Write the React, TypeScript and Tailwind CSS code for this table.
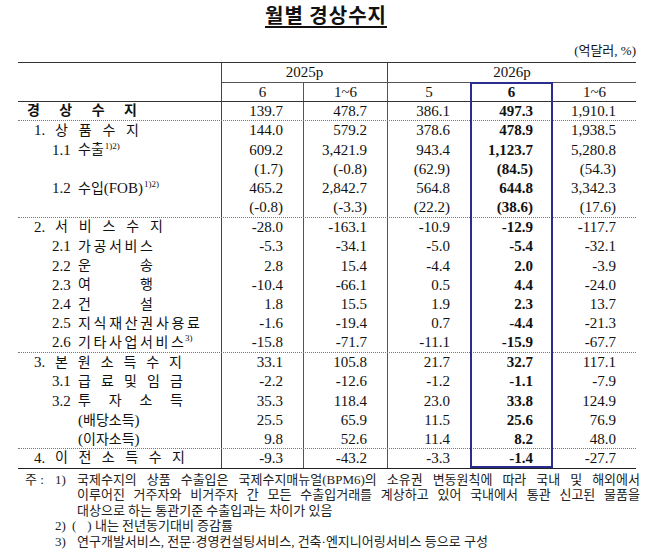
import React from "react";

const serif = "font-['Liberation_Serif','Noto_Sans_CJK_KR',serif]";

interface IRow {
  label: React.ReactNode;
  vals: string[];
  line?: "dotted" | "solid";
}

const Spread = ({ text, className }: { text: string; className: string }) => (
  <span className={`flex justify-between text-[14px] ${className}`}>
    {text.split("").map((c, i) => (
      <span key={i}>{c}</span>
    ))}
  </span>
);

const Sup = ({ children }: { children: React.ReactNode }) => (
  <sup className="ml-[1px] text-[9px]">{children}</sup>
);

// main section: "1." then spaced hangul
const Main = ({ no, text, w }: { no: string; text: string; w: string }) => (
  <span className="flex items-center pl-[16px]">
    <span className="w-[21px]">{no}</span>
    <Spread text={text} className={w} />
  </span>
);

// sub section: "2.1" then hangul
const Sub = ({ no, children }: { no: string; children: React.ReactNode }) => (
  <span className="flex items-center pl-[34px]">
    <span className="w-[26px]">{no}</span>
    {children}
  </span>
);

const rows: IRow[] = [
  {
    label: (
      <span className="pl-[9px]">
        <Spread text="경상수지" className="w-[110px] font-bold" />
      </span>
    ),
    vals: ["139.7", "478.7", "386.1", "497.3", "1,910.1"],
    line: "dotted",
  },
  { label: <Main no="1." text="상품수지" w="w-[84px]" />, vals: ["144.0", "579.2", "378.6", "478.9", "1,938.5"] },
  {
    label: (
      <Sub no="1.1">
        <span className="text-[14px]">수출</span>
        <Sup>1)2)</Sup>
      </Sub>
    ),
    vals: ["609.2", "3,421.9", "943.4", "1,123.7", "5,280.8"],
  },
  { label: null, vals: ["(1.7)", "(-0.8)", "(62.9)", "(84.5)", "(54.3)"] },
  {
    label: (
      <Sub no="1.2">
        <span className="text-[14px]">수입</span>
        <span>(FOB)</span>
        <Sup>1)2)</Sup>
      </Sub>
    ),
    vals: ["465.2", "2,842.7", "564.8", "644.8", "3,342.3"],
  },
  { label: null, vals: ["(-0.8)", "(-3.3)", "(22.2)", "(38.6)", "(17.6)"], line: "dotted" },
  { label: <Main no="2." text="서비스수지" w="w-[108px]" />, vals: ["-28.0", "-163.1", "-10.9", "-12.9", "-117.7"] },
  {
    label: (
      <Sub no="2.1">
        <Spread text="가공서비스" className="w-[75px]" />
      </Sub>
    ),
    vals: ["-5.3", "-34.1", "-5.0", "-5.4", "-32.1"],
  },
  {
    label: (
      <Sub no="2.2">
        <Spread text="운송" className="w-[75px]" />
      </Sub>
    ),
    vals: ["2.8", "15.4", "-4.4", "2.0", "-3.9"],
  },
  {
    label: (
      <Sub no="2.3">
        <Spread text="여행" className="w-[75px]" />
      </Sub>
    ),
    vals: ["-10.4", "-66.1", "0.5", "4.4", "-24.0"],
  },
  {
    label: (
      <Sub no="2.4">
        <Spread text="건설" className="w-[75px]" />
      </Sub>
    ),
    vals: ["1.8", "15.5", "1.9", "2.3", "13.7"],
  },
  {
    label: (
      <Sub no="2.5">
        <Spread text="지식재산권사용료" className="w-[122px]" />
      </Sub>
    ),
    vals: ["-1.6", "-19.4", "0.7", "-4.4", "-21.3"],
  },
  {
    label: (
      <Sub no="2.6">
        <Spread text="기타사업서비스" className="w-[106px]" />
        <Sup>3)</Sup>
      </Sub>
    ),
    vals: ["-15.8", "-71.7", "-11.1", "-15.9", "-67.7"],
    line: "dotted",
  },
  { label: <Main no="3." text="본원소득수지" w="w-[127px]" />, vals: ["33.1", "105.8", "21.7", "32.7", "117.1"] },
  {
    label: (
      <Sub no="3.1">
        <Spread text="급료및임금" className="w-[105px]" />
      </Sub>
    ),
    vals: ["-2.2", "-12.6", "-1.2", "-1.1", "-7.9"],
  },
  {
    label: (
      <Sub no="3.2">
        <Spread text="투자소득" className="w-[105px]" />
      </Sub>
    ),
    vals: ["35.3", "118.4", "23.0", "33.8", "124.9"],
  },
  {
    label: (
      <span className="pl-[60px]">
        (<span className="text-[14px]">배당소득</span>)
      </span>
    ),
    vals: ["25.5", "65.9", "11.5", "25.6", "76.9"],
  },
  {
    label: (
      <span className="pl-[60px]">
        (<span className="text-[14px]">이자소득</span>)
      </span>
    ),
    vals: ["9.8", "52.6", "11.4", "8.2", "48.0"],
    line: "dotted",
  },
  { label: <Main no="4." text="이전소득수지" w="w-[130px]" />, vals: ["-9.3", "-43.2", "-3.3", "-1.4", "-27.7"], line: "solid" },
];

const cols = [
  "w-[82px] border-r border-[#555]",
  "w-[84px] border-r border-[#555]",
  "w-[82px]",
  "w-[83px] font-bold",
  "w-[83px]",
];

const App = () => {
  return (
    <div className={`w-[658px] h-[559px] bg-white text-[#111] ${serif}`}>
      <div className="h-[40px] flex justify-center pt-[3px] pr-[6px]">
        <h1 className="font-['Noto_Sans_CJK_KR',sans-serif] text-[20px] font-bold leading-[24px] tracking-[1px] underline underline-offset-[3px] decoration-[1.5px]">
          월별 경상수지
        </h1>
      </div>
      <div className="h-[22px] pr-[22px] text-right text-[13px] leading-[22px]">(억달러, %)</div>

      <div className="relative ml-[18px] w-[618px] border-t border-[#333] text-[15px]">
        {/* header */}
        <div className="flex h-[39px] border-b border-[#333]">
          <div className="w-[204px] border-r border-[#444]" />
          <div className="flex w-[414px] flex-col">
            <div className="flex h-[20px] border-b border-[#555]">
              <div className="flex w-[166px] items-center justify-center border-r border-[#444] leading-none">2025p</div>
              <div className="flex w-[248px] items-center justify-center leading-none">2026p</div>
            </div>
            <div className="flex h-[18px]">
              {["6", "1~6", "5", "6", "1~6"].map((h, i) => (
                <div key={i} className={`flex items-center justify-center leading-none ${cols[i]}`}>
                  {h}
                </div>
              ))}
            </div>
          </div>
        </div>

        {/* body */}
        {rows.map((r, ri) => (
          <div
            key={ri}
            className={`flex h-[19.3px] ${
              r.line === "dotted"
                ? "border-b border-dotted border-[#777]"
                : r.line === "solid"
                ? "border-b border-[#222]"
                : ""
            }`}
          >
            <div className="flex w-[204px] items-center border-r border-[#444] leading-none">{r.label}</div>
            {r.vals.map((v, i) => (
              <div key={i} className={`flex items-center justify-end pr-5 leading-none ${cols[i]}`}>
                {v}
              </div>
            ))}
          </div>
        ))}

        <div className="absolute left-[452px] top-[19px] h-[386px] w-[83px] border-2 border-[#2b2d8e]" />
      </div>

      {/* notes */}
      <div className="mt-[3px] text-[13px] leading-[15.5px] text-[#222]">
        <div className="flex">
          <span className="ml-[25px] w-[30px]">주 :</span>
          <span className="w-[22px]">1)</span>
          <span className="w-[563px] text-justify [text-align-last:justify]">
            국제수지의 상품 수출입은 국제수지매뉴얼(BPM6)의 소유권 변동원칙에 따라 국내 및 해외에서
          </span>
        </div>
        <div className="ml-[77px] w-[563px] text-justify [text-align-last:justify]">
          이루어진 거주자와 비거주자 간 모든 수출입거래를 계상하고 있어 국내에서 통관 신고된 물품을
        </div>
        <div className="ml-[77px]">대상으로 하는 통관기준 수출입과는 차이가 있음</div>
        <div className="flex">
          <span className="ml-[55px] w-[17px]">2)</span>
          <span>
            (<span className="inline-block w-[11px]" />) 내는 전년동기대비 증감률
          </span>
        </div>
        <div className="flex">
          <span className="ml-[55px] w-[22px]">3)</span>
          <span>연구개발서비스, 전문·경영컨설팅서비스, 건축·엔지니어링서비스 등으로 구성</span>
        </div>
      </div>
    </div>
  );
};

export default App;
